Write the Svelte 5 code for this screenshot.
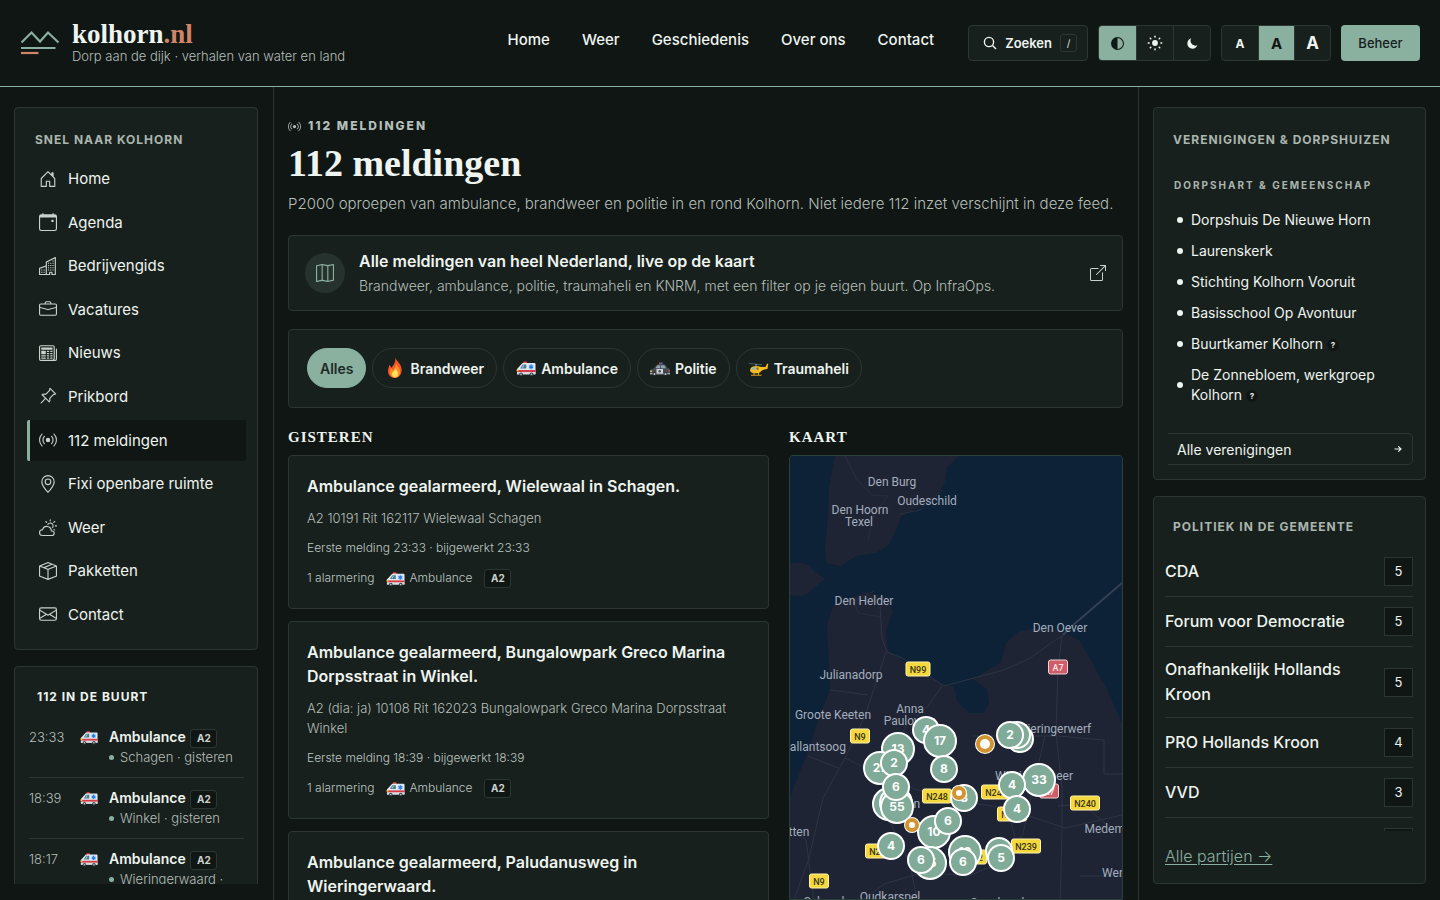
<script>
  const paths = {
    house: 'M8.354 1.146a.5.5 0 0 0-.708 0l-6 6A.5.5 0 0 0 1.5 7.5v7a.5.5 0 0 0 .5.5h4.5a.5.5 0 0 0 .5-.5v-4h2v4a.5.5 0 0 0 .5.5H14a.5.5 0 0 0 .5-.5v-7a.5.5 0 0 0-.146-.354L13 5.793V2.5a.5.5 0 0 0-.5-.5h-1a.5.5 0 0 0-.5.5v1.293zM2.5 14V7.707l5.5-5.5 5.5 5.5V14H10v-4a.5.5 0 0 0-.5-.5h-3a.5.5 0 0 0-.5.5v4z',
    calendar: 'M11 6.5a.5.5 0 0 1 .5-.5h1a.5.5 0 0 1 .5.5v1a.5.5 0 0 1-.5.5h-1a.5.5 0 0 1-.5-.5zM3.5 0a.5.5 0 0 1 .5.5V1h8V.5a.5.5 0 0 1 1 0V1h1a2 2 0 0 1 2 2v11a2 2 0 0 1-2 2H2a2 2 0 0 1-2-2V3a2 2 0 0 1 2-2h1V.5a.5.5 0 0 1 .5-.5M1 4v10a1 1 0 0 0 1 1h12a1 1 0 0 0 1-1V4z',
    buildings: 'M14.763.075A.5.5 0 0 1 15 .5v15a.5.5 0 0 1-.5.5h-3a.5.5 0 0 1-.5-.5V14h-1v1.5a.5.5 0 0 1-.5.5h-9a.5.5 0 0 1-.5-.5V10a.5.5 0 0 1 .342-.474L6 7.64V4.5a.5.5 0 0 1 .276-.447l8-4a.5.5 0 0 1 .487.022M6 8.694 1 10.36V15h5zM7 15h2v-1.5a.5.5 0 0 1 .5-.5h2a.5.5 0 0 1 .5.5V15h2V1.309l-7 3.5zM2 11h1v1H2zm2 0h1v1H4zm-2 2h1v1H2zm2 0h1v1H4zm4-4h1v1H8zm2 0h1v1h-1zm-2 2h1v1H8zm2 0h1v1h-1zm2-2h1v1h-1zm0 2h1v1h-1zM8 7h1v1H8zm2 0h1v1h-1zm2 0h1v1h-1zM8 5h1v1H8zm2 0h1v1h-1zm2 0h1v1h-1zm0-2h1v1h-1z',
    briefcase: 'M6.5 1A1.5 1.5 0 0 0 5 2.5V3H1.5A1.5 1.5 0 0 0 0 4.5v8A1.5 1.5 0 0 0 1.5 14h13a1.5 1.5 0 0 0 1.5-1.5v-8A1.5 1.5 0 0 0 14.5 3H11v-.5A1.5 1.5 0 0 0 9.5 1zm0 1h3a.5.5 0 0 1 .5.5V3H6v-.5a.5.5 0 0 1 .5-.5m1.886 6.914L15 7.151V12.5a.5.5 0 0 1-.5.5h-13a.5.5 0 0 1-.5-.5V7.15l6.614 1.764a1.5 1.5 0 0 0 .772 0M1.5 4h13a.5.5 0 0 1 .5.5v1.616L8.129 7.948a.5.5 0 0 1-.258 0L1 6.116V4.5a.5.5 0 0 1 .5-.5',
    newspaper: 'M0 2.5A1.5 1.5 0 0 1 1.5 1h11A1.5 1.5 0 0 1 14 2.5v10.528c0 .3-.05.654-.238.972h.738a.5.5 0 0 0 .5-.5v-9a.5.5 0 0 1 1 0v9a1.5 1.5 0 0 1-1.5 1.5H1.497A1.497 1.497 0 0 1 0 13.5zM12 14c.37 0 .654-.211.853-.441.092-.106.147-.279.147-.531V2.5a.5.5 0 0 0-.5-.5h-11a.5.5 0 0 0-.5.5v11c0 .278.223.5.497.5zM2 3h10v2H2zm0 3h4v3H2zm0 4h4v1H2zm0 2h4v1H2zm5-6h2v1H7zm3 0h2v1h-2zM7 8h2v1H7zm3 0h2v1h-2zm-3 2h2v1H7zm3 0h2v1h-2zm-3 2h2v1H7zm3 0h2v1h-2z',
    pin: 'M9.828.722a.5.5 0 0 1 .354.146l4.95 4.95a.5.5 0 0 1 0 .707c-.48.48-1.072.588-1.503.588-.177 0-.335-.018-.46-.039l-3.134 3.134a6 6 0 0 1 .16 1.013c.046.702-.032 1.687-.72 2.375a.5.5 0 0 1-.707 0l-2.829-2.828-3.182 3.182c-.195.195-1.219.902-1.414.707s.512-1.22.707-1.414l3.182-3.182-2.828-2.829a.5.5 0 0 1 0-.707c.688-.688 1.673-.767 2.375-.72a6 6 0 0 1 1.013.16l3.134-3.133a3 3 0 0 1-.04-.461c0-.43.108-1.022.589-1.503a.5.5 0 0 1 .353-.146m.122 2.112v-.002zm0-.002v.002a.5.5 0 0 1-.122.51L6.293 6.878a.5.5 0 0 1-.511.12H5.78l-.014-.004a5 5 0 0 0-.288-.076 5 5 0 0 0-.765-.116c-.422-.028-.836.008-1.175.15l5.51 5.509c.141-.34.177-.753.149-1.175a5 5 0 0 0-.192-1.054l-.004-.013v-.001a.5.5 0 0 1 .12-.512l3.536-3.535a.5.5 0 0 1 .532-.115l.096.022c.087.017.208.034.344.034q.172.002.343-.04L9.927 2.028q-.042.172-.04.343a1.8 1.8 0 0 0 .062.46z',
    broadcast: 'M3.05 3.05a7 7 0 0 0 0 9.9.5.5 0 0 1-.707.707 8 8 0 0 1 0-11.314.5.5 0 0 1 .707.707m2.122 2.122a4 4 0 0 0 0 5.656.5.5 0 1 1-.708.708 5 5 0 0 1 0-7.072.5.5 0 0 1 .708.708m5.656-.708a.5.5 0 0 1 .708 0 5 5 0 0 1 0 7.072.5.5 0 1 1-.708-.708 4 4 0 0 0 0-5.656.5.5 0 0 1 0-.708m2.122-2.12a.5.5 0 0 1 .707 0 8 8 0 0 1 0 11.313.5.5 0 0 1-.707-.707 7 7 0 0 0 0-9.9.5.5 0 0 1 0-.707zM10 8a2 2 0 1 1-4 0 2 2 0 0 1 4 0',
    geo: 'M12.166 8.94c-.524 1.062-1.234 2.12-1.96 3.07A32 32 0 0 1 8 14.58a32 32 0 0 1-2.206-2.57c-.726-.95-1.436-2.008-1.96-3.07C3.304 7.867 3 6.862 3 6a5 5 0 0 1 10 0c0 .862-.305 1.867-.834 2.94M8 16s6-5.686 6-10A6 6 0 0 0 2 6c0 4.314 6 10 6 10M8 8a2 2 0 1 1 0-4 2 2 0 0 1 0 4m0 1a3 3 0 1 0 0-6 3 3 0 0 0 0 6',
    cloud: 'M7 8a3.5 3.5 0 0 1 3.5 3.555.5.5 0 0 0 .624.492A1.503 1.503 0 0 1 13 13.5a1.5 1.5 0 0 1-1.5 1.5H3a2 2 0 1 1 .1-3.998.5.5 0 0 0 .51-.375A3.5 3.5 0 0 1 7 8m4.473 3a4.5 4.5 0 0 0-8.72-.99A3 3 0 0 0 3 16h8.5a2.5 2.5 0 0 0 0-5zM10.5 1.5a.5.5 0 0 0-1 0v1a.5.5 0 0 0 1 0zm3.743 1.964a.5.5 0 1 0-.707-.707l-.708.707a.5.5 0 0 0 .708.708zm-7.779-.707a.5.5 0 0 0-.707.707l.707.708a.5.5 0 1 0 .708-.708zm1.734 3.374a2 2 0 1 1 3.296 2.198q.3.423.516.898a3 3 0 1 0-4.84-3.225q.529.017 1.028.129m4.484 4.074c.6.215 1.125.59 1.522 1.072a.5.5 0 0 0 .039-.742l-.707-.707a.5.5 0 0 0-.854.377M14.5 6.5a.5.5 0 0 0 0 1h1a.5.5 0 0 0 0-1z',
    box: 'M8.186 1.113a.5.5 0 0 0-.372 0L1.846 3.5l2.404.961L10.404 2zm3.564 1.426L5.596 5 8 5.961 14.154 3.5zm3.25 1.7-6.5 2.6v7.922l6.5-2.6V4.24zM7.5 14.762V6.838L1 4.239v7.923zM7.443.184a1.5 1.5 0 0 1 1.114 0l7.129 2.852A.5.5 0 0 1 16 3.5v8.662a1 1 0 0 1-.629.928l-7.185 2.874a.5.5 0 0 1-.372 0L.63 13.09a1 1 0 0 1-.63-.928V3.5a.5.5 0 0 1 .314-.464z',
    envelope: 'M0 4a2 2 0 0 1 2-2h12a2 2 0 0 1 2 2v8a2 2 0 0 1-2 2H2a2 2 0 0 1-2-2zm2-1a1 1 0 0 0-1 1v.217l7 4.2 7-4.2V4a1 1 0 0 0-1-1zm13 2.383-4.708 2.825L15 11.105zm-.034 6.876-5.64-3.471L8 9.583l-1.326-.795-5.64 3.47A1 1 0 0 0 2 13h12a1 1 0 0 0 .966-.741M1 11.105l4.708-2.897L1 5.383z',
    map: 'M15.817.113A.5.5 0 0 1 16 .5v14a.5.5 0 0 1-.402.49l-5 1a.5.5 0 0 1-.196 0L5.5 15.01l-4.902.98A.5.5 0 0 1 0 15.5v-14a.5.5 0 0 1 .402-.49l5-1a.5.5 0 0 1 .196 0L10.5.99l4.902-.98a.5.5 0 0 1 .415.103M10 1.91l-4-.8v12.98l4 .8zm1 12.98 4-.8V1.11l-4 .8zm-6-.8V1.11l-4 .8v12.98z',
    external: 'M8.636 3.5a.5.5 0 0 0-.5-.5H1.5A1.5 1.5 0 0 0 0 4.5v10A1.5 1.5 0 0 0 1.5 16h10a1.5 1.5 0 0 0 1.5-1.5V7.864a.5.5 0 0 0-1 0V14.5a.5.5 0 0 1-.5.5h-10a.5.5 0 0 1-.5-.5v-10a.5.5 0 0 1 .5-.5h6.636a.5.5 0 0 0 .5-.5M16 .5a.5.5 0 0 0-.5-.5h-5a.5.5 0 0 0 0 1h3.793L6.146 9.146a.5.5 0 1 0 .708.708L15 1.707V5.5a.5.5 0 0 0 1 0z'
  };

  const topNav = ['Home', 'Weer', 'Geschiedenis', 'Over ons', 'Contact'];
  const quick = [
    ['house', 'Home'], ['calendar', 'Agenda'], ['buildings', 'Bedrijvengids'], ['briefcase', 'Vacatures'],
    ['newspaper', 'Nieuws'], ['pin', 'Prikbord'], ['broadcast', '112 meldingen'], ['geo', 'Fixi openbare ruimte'],
    ['cloud', 'Weer'], ['box', 'Pakketten'], ['envelope', 'Contact']
  ];
  const nearby = [
    ['23:33', 'Schagen · gisteren'],
    ['18:39', 'Winkel · gisteren'],
    ['18:17', 'Wieringerwaard · gisteren']
  ];
  const filters = [['', 'Alles'], ['fire', 'Brandweer'], ['ambulance', 'Ambulance'], ['police', 'Politie'], ['heli', 'Traumaheli']];
  let active = $state('Alles');
  let theme = $state('auto');
  let size = $state('m');

  const alerts = [
    { title: 'Ambulance gealarmeerd, Wielewaal in Schagen.', raw: 'A2 10191 Rit 162117 Wielewaal Schagen', time: '23:33' },
    { title: 'Ambulance gealarmeerd, Bungalowpark Greco Marina Dorpsstraat in Winkel.', raw: 'A2 (dia: ja) 10108 Rit 162023 Bungalowpark Greco Marina Dorpsstraat Winkel', time: '18:39' },
    { title: 'Ambulance gealarmeerd, Paludanusweg in Wieringerwaard.', raw: '', time: '' }
  ];
  const clubs = [
    ['Dorpshuis De Nieuwe Horn'], ['Laurenskerk'], ['Stichting Kolhorn Vooruit'], ['Basisschool Op Avontuur'],
    ['Buurtkamer Kolhorn', true], ['De Zonnebloem, werkgroep Kolhorn', true]
  ];
  const parties = [['CDA', 5], ['Forum voor Democratie', 5], ['Onafhankelijk Hollands Kroon', 5], ['PRO Hollands Kroon', 4], ['VVD', 3], ['', '']];

  const places = [
    [102, 30, 'Den Burg'], [137, 49, 'Oudeschild'], [70, 58, 'Den Hoorn'], [69, 70, 'Texel'], [74, 149, 'Den Helder'],
    [270, 176, 'Den Oever'], [61, 223, 'Julianadorp'], [43, 263, 'Groote Keeten'], [120, 257, 'Anna'], [120, 269, 'Paulowna'],
    [264, 277, 'Wieringerwerf'], [24, 295, 'Callantsoog'], [244, 324, 'Wieringermeer'], [107, 352, 'Schagen'],
    [2, 380, 'Petten'], [324, 377, 'Medemblik'], [100, 445, 'Oudkarspel'], [346, 421, 'Wervershoof'], [34, 450, 'Schoorl'], [209, 451, 'Spanbroek']
  ];
  const shields = [
    [128, 213, 'N99'], [268, 211, 'A7', 1], [70, 280, 'N9'], [147, 340, 'N248'], [206, 336, 'N248'], [222, 358, 'N242'],
    [259, 335, 'A7', 1], [295, 347, 'N240'], [90, 395, 'N245'], [236, 390, 'N239'], [182, 401, 'N242'], [29, 425, 'N9']
  ];
  const clusters = [
    [136, 274, 13, '4'], [150, 285, 16, '17'], [108, 293, 16, '13'], [90, 312, 16, '27'], [104, 307, 13, '2'], [154, 313, 13, '8'],
    [230, 283, 13, ''], [227, 279, 13, ''], [220, 279, 13, '2'], [99, 348, 16, ''], [106, 347, 16, ''], [107, 351, 16, '55'], [106, 331, 13, '6'],
    [174, 342, 13, '3'], [144, 376, 16, '10'], [158, 365, 13, '6'], [101, 390, 13, '4'], [140, 407, 16, '15'], [131, 404, 13, '6'],
    [175, 396, 16, '19'], [173, 406, 13, '6'], [209, 395, 13, ''], [211, 402, 13, '5'], [249, 324, 16, '33'], [222, 329, 13, '4'], [227, 353, 13, '4']
  ];
  const incidents = [[195, 288, 8, 5], [169, 337, 6, 3], [122, 369, 6, 3]];
</script>

{#snippet icon(name, px)}
  <svg class="icon" width={px} height={px} viewBox="0 0 16 16" fill="currentColor" fill-rule="evenodd" aria-hidden="true"><path d={paths[name]} /></svg>
{/snippet}

{#snippet emoji(kind, px)}
  <svg class="emoji" width={px} height={px} viewBox="0 0 20 20" aria-hidden="true">
    {#if kind === 'ambulance'}
      <path d="M7.500 3.500h3.300l.5 2H7z" fill="#e8434a" />
      <path d="M6.500 5h12q1 0 1 1v10H1v-4.500q0-1 1-1.500z" fill="#e5e9ed" />
      <path d="M6.700 6.500h3.600v4H4.200z" fill="#477b91" /><path d="M7.400 7h1l-1.500 3h-1z" fill="#a9d7e5" />
      <path d="M12.500 5.800h5.200v5.600h-5.200z" fill="#c9e0f7" />
      <path d="M14.500 6.500h1.200v1.300l1.100-.6.600 1-1.100.6 1.100.7-.6 1-1.100-.6v1.300h-1.200V9.900l-1.100.6-.6-1 1.100-.7-1.100-.6.6-1 1.100.6z" fill="#257be8" />
      <path d="M1 12h18.500v2.200H1z" fill="#d63b45" />
      <path d="M1 14.200h18.500v2.300H1z" fill="#d5dce0" /><path d="M.6 11.500h1.800v1.800H.6z" fill="#f6c94a" />
      <circle cx="5" cy="16.300" r="1.900" fill="#39424a" /><circle cx="15.500" cy="16.300" r="1.900" fill="#39424a" />
      <circle cx="5" cy="16.300" r=".8" fill="#c7d0d5" /><circle cx="15.500" cy="16.300" r=".8" fill="#c7d0d5" />
    {:else if kind === 'fire'}
      <path d="M10.500 0c1 3 5.300 5.200 6 10.500C17.300 16 14 20 10 20S2.700 17 3 12.500c.1-2 1-3.500 1.300-5.500 1 .7 1.700 1.700 1.900 3C8.600 7 10.800 4 10.500 0" fill="#f4552b" />
      <path d="M11 5c.2 2.500 4 4.500 4 8.500s-2.200 6-5 6-5-2-5-5c0-2 1-3.300 1-4.500 1 .5 1.500 1.500 1.600 2.500C9.500 10.500 11.200 8 11 5" fill="#fb9126" />
      <path d="M10.500 10c0 2 2.500 3 2.500 5.700 0 2.300-1.300 3.600-3 3.600S7 18 7 16s3-3 3.500-6" fill="#fde45a" />
    {:else if kind === 'police'}
      <path d="M9 4.500h1.800v2H9z" fill="#ef3c40" /><path d="M10.800 4.500h1.800v2h-1.800z" fill="#2e77e8" />
      <path d="M7.500 6.300h7q1.500.4 3 3.700l1.700.6q.8.400.8 1.500V16H0v-2.800q0-1.600 1.500-2l2.500-.9q2-3.500 3.500-4" fill="#454a50" />
      <path d="M7.800 7.300h2.400v2.900H5.600q1.200-2.300 2.200-2.900M11 7.300h3q1 .6 1.900 2.900H11z" fill="#8fa4af" />
      <path d="M6.500 11h6.500v4.500H6.500z" fill="#cfd5d9" /><circle cx="9.700" cy="13.200" r="1.300" fill="#4b5258" />
      <path d="M0 12.400h2v1.300H0z" fill="#f4d26e" /><path d="M18.400 12h1.600v1.300h-1.600z" fill="#e5454a" />
      <path d="M0 15h20v1.400H0z" fill="#a5acb1" />
      <circle cx="4.500" cy="16" r="2.100" fill="#2b3034" /><circle cx="15.500" cy="16" r="2.100" fill="#2b3034" />
      <circle cx="4.500" cy="16" r="1" fill="#c8ced2" /><circle cx="15.500" cy="16" r="1" fill="#c8ced2" />
    {:else}
      <path d="M0 5.200 13 6.200v.7L0 5.900z" fill="#5c707a" /><path d="M6.500 6h1.200v2.500H6.500z" fill="#8d9da5" />
      <path d="M5 8.300h4.500q3 1.300 7.300.4l1.200-3h1.300l-.9 5.200q-4.200.4-6.300 2.300-1.300 2-4 2H5.500q-3.600 0-4.500-2.700.5-3.700 4-4.200" fill="#f9bd24" />
      <path d="M5 9.300h1.300v2.400H2.200q.6-2.100 2.800-2.400" fill="#7fb9c9" /><path d="M7.500 9.500h2v2.200h-2z" fill="#6d6a45" />
      <path d="M5 15v2M9.500 15v2M2 17.300h10.500" fill="none" stroke="#d99a18" stroke-width="1.100" />
    {/if}
  </svg>
{/snippet}

<div class="page">
  <header>
    <a class="brand" href="#home">
      <svg width="40" height="28" viewBox="0 0 40 28" fill="none" aria-hidden="true">
        <path d="m1.500 14.500 10-10 8.500 9 8-9 10.500 10" stroke="#8ab0a0" stroke-width="2.200" />
        <path d="M1 20h34.500" stroke="#8ab0a0" stroke-width="2.200" /><path d="M1 25h17.500" stroke="#d08468" stroke-width="2.200" />
      </svg>
      <span class="brand-text">
        <span class="wordmark">kolhorn<em>.nl</em></span>
        <span class="tagline">Dorp aan de dijk · verhalen van water en land</span>
      </span>
    </a>
    <nav class="top" aria-label="Hoofdmenu">
      {#each topNav as item}<a href="#{item}">{item}</a>{/each}
    </nav>
    <div class="tools">
      <button class="search">
        <svg width="14" height="14" viewBox="0 0 14 14" fill="none" stroke="currentColor" stroke-width="1.400" aria-hidden="true"><circle cx="6" cy="6" r="4.600" /><path d="m9.500 9.500 3.500 3.500" /></svg>
        <span>Zoeken</span><kbd>/</kbd>
      </button>
      <div class="segment" role="group" aria-label="Thema">
        <button class:on={theme === 'auto'} aria-label="Automatisch" onclick={() => (theme = 'auto')}>
          <svg width="13" height="13" viewBox="0 0 16 16" fill="currentColor"><path d="M8 14.700A6.700 6.700 0 0 0 8 1.300zM8 16A8 8 0 1 1 8 0a8 8 0 0 1 0 16" fill-rule="evenodd" /></svg>
        </button>
        <button class:on={theme === 'light'} aria-label="Licht" onclick={() => (theme = 'light')}>
          <svg width="16" height="16" viewBox="0 0 16 16" fill="currentColor"><circle cx="8" cy="8" r="2.900" /><g stroke="currentColor" stroke-width="1.500" stroke-linecap="round"><path d="M8 1.300v.8M8 13.900v.8M1.300 8h.8M13.900 8h.8M3.300 3.300l.5.500M12.200 12.200l.5.500M3.300 12.700l.5-.5M12.200 3.800l.5-.5" /></g></svg>
        </button>
        <button class:on={theme === 'dark'} aria-label="Donker" onclick={() => (theme = 'dark')}>
          <svg width="11" height="11" viewBox="0 0 16 16" fill="currentColor"><path d="M6 .3a7.200 7.200 0 0 0-.9 3.500c0 4 3.200 7.300 7.300 7.300.8 0 1.800-.2 2.600-.5a7.600 7.600 0 0 1-7 4.900C4 15.500.5 12 .5 7.900.5 4.500 2.800 1.400 6 .3" /></svg>
        </button>
      </div>
      <div class="segment letters" role="group" aria-label="Tekstgrootte">
        <button class="s" class:on={size === 's'} onclick={() => (size = 's')}>A</button>
        <button class="m" class:on={size === 'm'} onclick={() => (size = 'm')}>A</button>
        <button class="l" class:on={size === 'l'} onclick={() => (size = 'l')}>A</button>
      </div>
      <button class="manage">Beheer</button>
    </div>
  </header>

  <div class="columns">
    <aside class="left">
      <nav class="card quick" aria-label="Snel naar Kolhorn">
        <h2>Snel naar Kolhorn</h2>
        <ul>
          {#each quick as [glyph, label]}
            <li><a href="#{glyph}" class:current={glyph === 'broadcast'}>{@render icon(glyph, 18)}<span>{label}</span></a></li>
          {/each}
        </ul>
      </nav>
      <section class="card nearby">
        <h2>112 in de buurt</h2>
        <ul>
          {#each nearby as [time, where]}
            <li>
              <time>{time}</time>{@render emoji('ambulance', 18)}
              <div>
                <p class="what">Ambulance <span class="tag">A2</span></p>
                <p class="where"><span>{where}</span></p>
              </div>
            </li>
          {/each}
        </ul>
      </section>
    </aside>

    <main>
      <p class="eyebrow">{@render icon('broadcast', 13)}<span>112 meldingen</span></p>
      <h1>112 meldingen</h1>
      <p class="intro">P2000 oproepen van ambulance, brandweer en politie in en rond Kolhorn. Niet iedere 112 inzet verschijnt in deze feed.</p>

      <a class="card promo" href="#kaart">
        <span class="disc">{@render icon('map', 18)}</span>
        <span class="promo-text">
          <strong>Alle meldingen van heel Nederland, live op de kaart</strong>
          <span>Brandweer, ambulance, politie, traumaheli en KNRM, met een filter op je eigen buurt. Op InfraOps.</span>
        </span>
        {@render icon('external', 16)}
      </a>

      <div class="card filters">
        {#each filters as [kind, label]}
          <button class:on={active === label} onclick={() => (active = label)}>
            {#if kind}{@render emoji(kind, 20)}{/if}<span>{label}</span>
          </button>
        {/each}
      </div>

      <div class="split">
        <section>
          <h2 class="serif">Gisteren</h2>
          <div class="feed">
            {#each alerts as a}
              <article class="card">
                <h3>{a.title}</h3>
                {#if a.raw}
                  <p class="raw">{a.raw}</p>
                  <p class="meta">Eerste melding {a.time} · bijgewerkt {a.time}</p>
                  <p class="meta facts"><span>1 alarmering</span><span class="kind">{@render emoji('ambulance', 19)}Ambulance</span><span class="tag">A2</span></p>
                {/if}
              </article>
            {/each}
          </div>
        </section>
        <section id="kaart">
          <h2 class="serif">Kaart</h2>
          <div class="map">
            <svg viewBox="0 0 332 500" role="img" aria-label="Kaart met meldingen">
              <rect width="332" height="500" fill="#0d2137" />
              <g fill="#1f2434">
                <path d="M45 0H168l-11 12-2 14-8 14-20 12-16 9-5 14-7 14-13 8-20 3-15 10-14-3-2-14 3-34 1-28z" />
                <path d="M0 108q15-5 23 6l12 9-12 10q-8 10-23 6z" />
                <path d="M44 148 75 136l20 5 8 14-7 20 2 20 20 13 34 20 12 3 3 14 12 12h15l5-10-2-14-14-10 28-17 5-19 12-11 18-4 24 2 20 11 28 50 17 40 5 65v158H0V341l18-46 12-36 10-25-3-66z" />
              </g>
              <path d="M55 0l12 24 15 15 16 1-15 20-5 24M110 58l20-4 22-20M84 135l-20 10 4 12 22 4" fill="none" stroke="#292e3d" stroke-width="1" />
              <g fill="none" stroke="#2d3444" stroke-width="1">
                <path d="M90 150l2 32 5 14 15 6 42 28 60-16 26-12 27-19 6-3M272 180l-4 32-2 66 6 54v40l-2 88M96 196l-13 40-8 24-20 42-22 40-14 60-15 42" />
                <path d="M40 234l38 5M152 230l-14 20-22 20-18 38-8 36 14 30 16 34 10 50M152 270l2 45M55 302l40 20 55 20 65 10 60 20 57-13M0 372l16 12 8 60M18 300l30 12M183 280h86l45 4v34h18M255 280l-14 60-8 38-20 28-35 14-44-4-40 12-50 38M215 345l10 36M268 350l25-2 25 22M290 420h42" />
              </g>
              <path d="m332 127-50 43-9 9" fill="none" stroke="#344152" stroke-width="2" />
              <g class="places">
                {#each places as [x, y, label]}<text {x} {y}>{label}</text>{/each}
              </g>
              <g class="shields">
                {#each shields as [x, y, label, red]}
                  {@const w = label.length * 5 + 9}
                  <rect x={x - w / 2} y={y - 7} width={w} height="14" rx="2" fill={red ? '#cf5c68' : '#f4d83d'} stroke={red ? '#f0d4d2' : '#fff3ad'} />
                  <text {x} y={y + 4} fill={red ? '#ffe8e8' : '#37351f'}>{label}</text>
                {/each}
              </g>
              <g class="clusters">
                {#each clusters as [x, y, r, label]}
                  <circle cx={x} cy={y} {r} /><text {x} y={y + 4}>{label}</text>
                {/each}
                {#each incidents as [x, y, r, inner]}
                  <circle cx={x} cy={y} r={r + 1} fill="#f3dca8" stroke="none" /><circle class="ring" cx={x} cy={y} {r} /><circle class="dot" cx={x} cy={y} r={inner} />
                {/each}
              </g>
            </svg>
          </div>
        </section>
      </div>
    </main>

    <aside class="right">
      <section class="card clubs">
        <h2>Verenigingen &amp; dorpshuizen</h2>
        <h3>Dorpshart &amp; gemeenschap</h3>
        <ul>
          {#each clubs as [name, unsure]}
            <li><a href="#club">{name}{#if unsure}<span class="hint">?</span>{/if}</a></li>
          {/each}
        </ul>
        <a class="all" href="#verenigingen"><span>Alle verenigingen</span><svg width="8" height="8" viewBox="0 0 8 8" fill="none" stroke="currentColor" stroke-width="1.200" aria-hidden="true"><path d="M.5 4h6.500M4.300 1.300 7 4 4.300 6.700" /></svg></a>
      </section>
      <section class="card politics">
        <h2>Politiek in de gemeente</h2>
        <ul>
          {#each parties as [name, seats]}<li><span>{name}</span><b>{seats}</b></li>{/each}
        </ul>
        <a href="#partijen">Alle partijen →</a>
      </section>
    </aside>
  </div>
</div>

<style>
  :global(body) { margin: 0; background: #101614; }
  * { box-sizing: border-box; }
  h1, h2, h3, p, ul { margin: 0; padding: 0; }
  ul { list-style: none; }
  a { color: inherit; text-decoration: none; }
  button { font: inherit; color: inherit; cursor: pointer; }
  .page { height: 100vh; overflow: hidden; display: flex; flex-direction: column; font-family: Inter, 'Open Sans', sans-serif; font-size: 15px; color: #eef4ef; background: #101614; }
  .icon, .emoji { flex: none; display: block; }

  header { flex: none; height: 87px; padding: 0 20px; display: flex; align-items: center; border-bottom: 1px solid #8ab0a0; }
  .brand { display: flex; align-items: center; gap: 12px; margin-right: auto; padding-bottom: 2px; }
  .brand-text { display: flex; flex-direction: column; }
  .wordmark { font: bold 27px/28px 'Liberation Serif', serif; }
  .wordmark em { font-style: normal; color: #d08468; }
  .tagline { font-size: 13px; line-height: 16px; font-weight: 300; color: #b5bfb9; }
  .top { display: flex; gap: 32px; margin-right: 34px; padding-bottom: 8px; font-weight: 500; }
  .tools { display: flex; gap: 10px; font-size: 13px; font-weight: 600; }
  .search { display: flex; align-items: center; gap: 8px; height: 36px; padding: 0 10px 0 14px; border: 1px solid #2c3733; border-radius: 4px; background: #18201d; }
  kbd { display: grid; place-items: center; width: 17px; height: 18px; border: 1px solid #2c3733; border-radius: 3px; font: 500 10px Inter, sans-serif; color: #c4cec8; }
  .segment { display: flex; height: 36px; border: 1px solid #2c3733; border-radius: 4px; overflow: hidden; background: #18201d; }
  .segment button { display: grid; place-items: center; width: 37px; padding: 0; border: 0; background: none; }
  .segment button + button { border-left: 1px solid #2c3733; }
  .segment .on { background: #8ab0a0; color: #101614; }
  .letters button { width: 36px; font-weight: 700; }
  .letters .s { font-size: 12px; }
  .letters .m { font-size: 15px; }
  .letters .l { font-size: 17px; }
  .manage { min-width: 79px; height: 36px; padding: 0 16px; border: 0; border-radius: 4px; background: #8ab0a0; color: #14201b; font-weight: 500; }

  .columns { flex: 1; min-height: 0; display: grid; grid-template-columns: 274px minmax(0, 1fr) 301px; }
  .card { background: #18201d; border: 1px solid #2b3632; border-radius: 4px; }
  aside h2 { font-size: 12px; line-height: 16px; font-weight: 700; letter-spacing: 1px; text-transform: uppercase; color: #aab5ae; }
  aside { display: flex; flex-direction: column; gap: 16px; min-height: 0; overflow: hidden; }
  .left { padding: 20px 16px 0 14px; margin-bottom: 16px; }
  .columns > main { border: solid #2b3632; border-width: 0 1px; margin-left: -1px; }

  .quick { flex: none; padding: 24px 11px 14px 12px; }
  .quick h2 { margin: 0 8px 10px; }
  .quick ul { display: flex; flex-direction: column; justify-content: space-between; min-height: 477px; }
  .quick a { display: flex; align-items: center; gap: 11px; height: 41px; padding-left: 9px; border-left: 3px solid transparent; border-radius: 2px; }
  .quick .icon { color: #c9d2cc; }
  .quick .current { background: #101614; border-left-color: #8ab0a0; }

  .nearby { flex: none; padding: 22px 13px 14px 14px; }
  .nearby h2 { margin: 0 8px 12px; color: #eef4ef; }
  .nearby li { display: flex; align-items: flex-start; padding: 9px 0; border-bottom: 1px solid #2b3632; }
  .nearby li > div { flex: 1; min-width: 0; }
  time { flex: none; width: 51px; font-size: 13px; line-height: 22px; font-weight: 300; color: #b5bfb9; }
  .nearby .emoji { margin: 2px 11px 0 0; }
  .what { font-size: 14px; line-height: 22px; font-weight: 600; white-space: nowrap; }
  .where { display: flex; align-items: flex-start; gap: 6px; font-size: 13px; line-height: 19px; font-weight: 300; color: #b5bfb9; padding-bottom: 1px; }
  .where::before { content: ''; flex: none; width: 5px; height: 5px; margin-top: 7px; border-radius: 50%; background: #8ab0a0; }
  .tag { display: inline-grid; place-items: center; width: 27px; height: 19px; margin-left: 1px; border: 1px solid #2b3632; border-radius: 3px; background: #101614; font-size: 10px; line-height: 12px; font-weight: 700; color: #c9d2cc; }

  main { min-width: 0; min-height: 0; overflow: hidden; padding: 30px 15px 0 14px; display: flex; flex-direction: column; }
  main > * { flex: none; }
  .eyebrow { display: flex; align-items: center; gap: 7px; font-size: 12px; line-height: 18px; font-weight: 800; letter-spacing: 2px; text-transform: uppercase; color: #b5bfb9; }
  h1 { margin-top: 5px; font: bold 38px/46px 'Liberation Serif', serif; }
  .intro { margin-top: 6px; font-size: 15px; line-height: 24px; font-weight: 300; color: #b5bfb9; }
  .promo { display: flex; align-items: center; gap: 14px; margin-top: 19px; height: 76px; padding: 0 16px; }
  .disc { display: grid; place-items: center; width: 40px; height: 40px; border-radius: 50%; background: #26322e; color: #8ab0a0; }
  .promo-text { flex: 1; min-width: 0; display: flex; flex-direction: column; padding-bottom: 1px; }
  .promo strong { font-size: 16px; line-height: 26px; font-weight: 600; }
  .promo-text span { font-size: 14px; line-height: 24px; font-weight: 300; color: #b5bfb9; }
  .promo > .icon { color: #c9d2cc; }
  .filters { display: flex; gap: 6px; margin-top: 18px; padding: 18px 18px 19px; }
  .filters button { display: flex; align-items: center; gap: 5px; height: 40px; padding: 0 12px; border: 1px solid #2b3632; border-radius: 20px; background: none; font-size: 14px; font-weight: 600; }
  .filters .on { background: #8ab0a0; border-color: #8ab0a0; color: #1c2b25; }
  .split { flex: 1; min-height: 0; display: grid; grid-template-columns: minmax(0, 1fr) 40%; column-gap: 20px; padding-top: 19px; }
  .split section { min-height: 0; display: flex; flex-direction: column; }
  .serif { flex: none; margin-bottom: 8px; font: bold 15px/20px 'Liberation Serif', serif; letter-spacing: 1px; text-transform: uppercase; }
  .feed { display: flex; flex-direction: column; gap: 12px; }
  article { display: flex; flex-direction: column; gap: 10px; padding: 18px 18px 20px; }
  article h3 { font-size: 16px; line-height: 24px; font-weight: 600; }
  .raw { font-size: 13px; line-height: 20px; font-weight: 300; color: #b5bfb9; }
  .meta { font-size: 12px; line-height: 20px; font-weight: 300; color: #bcc6c0; }
  .facts { display: flex; align-items: center; gap: 12px; }
  .facts .tag { margin-left: 0; }
  .kind { display: flex; align-items: center; gap: 4px; }
  .map { flex: 1; min-height: 0; overflow: hidden; border: 1px solid #2b4038; border-radius: 4px 4px 0 0; background: #1f2434; }
  .map svg { display: block; width: 100%; }
  .map text { text-anchor: middle; font-family: Roboto, sans-serif; }
  .places text { font-size: 12px; fill: #a3aebd; }
  .shields text { font-size: 9px; font-weight: 500; }
  .clusters circle { fill: #80ab98; stroke: #fff; stroke-width: 2; }
  .clusters .ring { fill: #d29432; stroke: #d29432; }
  .clusters .dot { fill: #fff; stroke: none; }
  .clusters text { font-family: Inter, sans-serif; font-size: 12px; font-weight: 700; fill: #fff; }

  .right { padding: 20px 14px 16px 14px; }
  .clubs { flex: none; padding: 24px 12px 14px 14px; }
  .clubs h2, .politics h2 { padding-left: 5px; white-space: nowrap; }
  .clubs h3 { margin: 30px 0 18px 6px; font-size: 10px; line-height: 14px; font-weight: 700; letter-spacing: 2px; text-transform: uppercase; color: #aab5ae; white-space: nowrap; }
  .clubs ul { display: flex; flex-direction: column; gap: 11px; padding: 0 20px 0 9px; }
  .clubs li { display: flex; align-items: center; gap: 8px; font-size: 14px; line-height: 20px; }
  .clubs li::before { content: ''; flex: none; width: 6px; height: 6px; border-radius: 50%; background: #eef4ef; }
  .hint { display: inline-grid; place-items: center; width: 12px; height: 12px; margin-left: 4px; border-radius: 50%; background: #101614; font-size: 8px; line-height: 12px; font-weight: 700; vertical-align: 1px; }
  .all { display: flex; align-items: center; justify-content: space-between; height: 32px; margin-top: 28px; padding: 0 10px 0 9px; border: 1px solid #2b3632; border-left: 0; border-radius: 0 5px 5px 0; font-size: 14px; }
  .politics { flex: 1; min-height: 0; display: flex; flex-direction: column; padding: 22px 12px 14px 11px; }
  .politics h2 { flex: none; padding-left: 8px; margin-bottom: 12px; }
  .politics ul { flex: 1; min-height: 0; overflow: hidden; }
  .politics li { display: flex; align-items: center; justify-content: space-between; gap: 20px; padding: 10px 0; border-bottom: 1px solid #2b3632; font-size: 16px; line-height: 25px; font-weight: 500; }
  .politics b { flex: none; display: grid; place-items: center; width: 29px; height: 29px; border: 1px solid #2b3632; background: #101614; font-size: 13px; font-weight: 400; }
  .politics > a { flex: none; align-self: flex-start; margin-top: 12px; font-size: 16px; line-height: 26px; font-weight: 300; color: #8ab0a0; text-decoration: underline; text-underline-offset: 2px; }
</style>
